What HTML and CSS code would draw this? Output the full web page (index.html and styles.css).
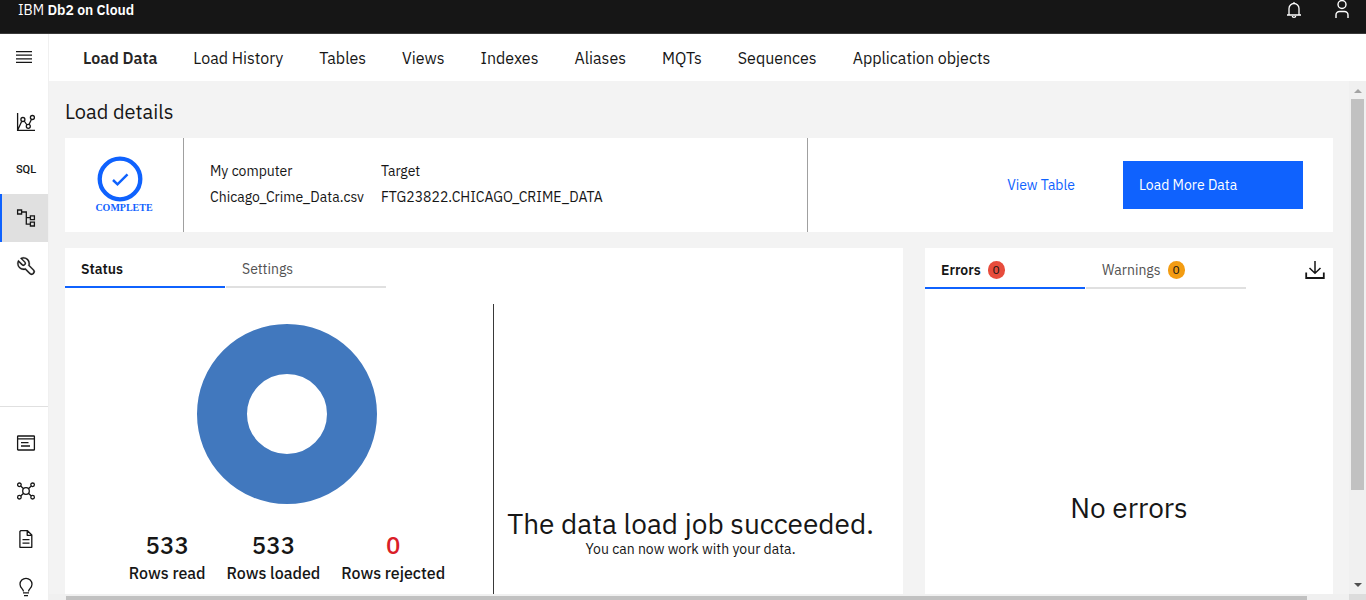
FILE: index.html
```html
<!DOCTYPE html>
<html lang="en">
<head>
<meta charset="utf-8">
<meta name="viewport" content="width=device-width, initial-scale=1">
<title>IBM Db2 on Cloud</title>
<link rel="stylesheet" href="styles.css">
</head>
<body>
<header class="topbar">
  <a class="brand" href="#">IBM <strong>Db2 on Cloud</strong></a>
  <div class="topbar-actions">
    <button class="top-button" type="button" aria-label="Notifications">
      <svg width="20" height="20" viewBox="0 0 20 20" fill="none" stroke="currentColor" stroke-width="1.3"><path d="M10 2v2M3 15h14M5 15V8.500a5 5 0 0 1 10 0V15M8.300 16a1.700 1.400 0 0 0 3.400 0"/></svg>
    </button>
    <button class="top-button" type="button" aria-label="Account">
      <svg width="20" height="20" viewBox="0 0 20 20" fill="none" stroke="currentColor" stroke-width="1.400"><circle cx="10" cy="4.500" r="4"/><path d="M4 18v-3a3.500 3.500 0 0 1 3.500-3.500h5A3.500 3.500 0 0 1 16 15v3"/></svg>
    </button>
  </div>
</header>
<div class="shell">
  <nav class="sidebar" aria-label="Main">
    <button class="menu-button" type="button" aria-label="Open menu">
      <svg width="16" height="12" viewBox="0 0 16 12" fill="none" stroke="currentColor" stroke-width="1.200"><path d="M0 .6h16M0 4.200h16M0 7.800h16M0 11.400h16"/></svg>
    </button>
    <div class="side-group">
      <a class="side-link" href="#" aria-label="Dashboard">
        <svg width="20" height="20" viewBox="0 0 20 20" fill="none" stroke="currentColor" stroke-width="1.300"><path d="M1.600 1v17.300H19M2 17.500 5.600 9.400M8.200 9l2.800 4M13 12.500l2.400-5"/><circle cx="6.900" cy="7.500" r="2"/><circle cx="12.300" cy="14.300" r="2"/><circle cx="16.400" cy="5.500" r="2"/></svg>
      </a>
      <a class="side-link side-link-text" href="#">SQL</a>
      <a class="side-link side-link-active" href="#" aria-label="Data">
        <svg width="20" height="20" viewBox="0 0 20 20" fill="none" stroke="currentColor" stroke-width="1.300"><path d="M1.600 2h4v4h-4zM14.400 7.800h4v3.800h-4zM14.400 14.200h4V18h-4zM5.600 4h4.700v12.100h4.100M10.300 9.700h4.100"/></svg>
      </a>
      <a class="side-link" href="#" aria-label="Administration">
        <svg width="20" height="20" viewBox="0 0 32 32" fill="currentColor" stroke="currentColor" stroke-width=".4"><path d="M12.100 2a9.800 9.800 0 0 0-5.400 1.600l6.400 6.400a2.100 2.100 0 0 1 .2 3 2.100 2.100 0 0 1-3-.2L3.700 6.400A9.840 9.840 0 0 0 2 12.100a10.140 10.140 0 0 0 10.100 10.100 10.900 10.900 0 0 0 2.600-.3l6.700 6.700a5 5 0 0 0 7.100-7.100l-6.700-6.700a10.900 10.900 0 0 0 .3-2.600A10 10 0 0 0 12.100 2zm8 10.100a7.610 7.610 0 0 1-.3 2.100l-.3 1.100.8.800 6.700 6.700a2.880 2.880 0 0 1 .9 2.100A2.720 2.720 0 0 1 27 27a2.900 2.900 0 0 1-4.200 0l-6.700-6.700-.8-.8-1.100.3a7.610 7.610 0 0 1-2.100.3 8.270 8.270 0 0 1-5.700-2.300A7.630 7.630 0 0 1 4 12.100a8.330 8.330 0 0 1 .3-2.200l4.400 4.400a4.140 4.140 0 0 0 5.900.2 4.140 4.140 0 0 0-.2-5.900L10 4.200a6.450 6.450 0 0 1 2-.3 8.270 8.270 0 0 1 5.700 2.300 8.490 8.490 0 0 1 2.400 5.900z"/></svg>
      </a>
    </div>
    <div class="side-group side-group-bottom">
      <a class="side-link" href="#" aria-label="Resources">
        <svg width="20" height="20" viewBox="0 0 20 20" fill="none" stroke="currentColor" stroke-width="1.300"><rect x="1.600" y="3" width="16.800" height="14" rx=".6"/><path d="M1.600 5.800h16.800M5 9.700h7.500M5 13h9"/></svg>
      </a>
      <a class="side-link" href="#" aria-label="Connections">
        <svg width="20" height="20" viewBox="0 0 20 20" fill="none" stroke="currentColor" stroke-width="1.300"><circle cx="10" cy="10" r="3.300"/><circle cx="3.400" cy="3.800" r="1.800"/><circle cx="16.600" cy="3.800" r="1.800"/><circle cx="3.400" cy="16.200" r="1.800"/><circle cx="16.600" cy="16.200" r="1.800"/><path d="m4.700 5.100 2.900 2.600M15.300 5.100l-2.900 2.600M4.700 14.900l2.900-2.600M15.300 14.900l-2.900-2.600"/></svg>
      </a>
      <a class="side-link" href="#" aria-label="Documentation">
        <svg width="20" height="20" viewBox="0 0 20 20" fill="none" stroke="currentColor" stroke-width="1.300" stroke-linejoin="round"><path d="M4.700 1.700h6.800l4.300 4.300v12.300H3.900V2.500zM11.200 1.700v4.600h4.600M6.500 10.700h7M6.500 14.200h7"/></svg>
      </a>
      <a class="side-link" href="#" aria-label="Tips">
        <svg width="20" height="20" viewBox="0 0 20 20" fill="none" stroke="currentColor" stroke-width="1.300"><path d="M7.500 14.500c0-2.500-3.500-3.500-3.500-7.200a6 6 0 0 1 12 0c0 3.700-3.500 4.700-3.500 7.200M7 15.900h6M8 18.600h4"/></svg>
      </a>
    </div>
  </nav>
  <div class="workspace">
    <nav class="section-nav" aria-label="Sections">
      <a class="section-current" href="#">Load Data</a>
      <a href="#">Load History</a>
      <a href="#">Tables</a>
      <a href="#">Views</a>
      <a href="#">Indexes</a>
      <a href="#">Aliases</a>
      <a href="#">MQTs</a>
      <a href="#">Sequences</a>
      <a href="#">Application objects</a>
    </nav>
    <div class="scroll-frame">
      <main class="content">
        <h1 class="page-title">Load details</h1>
        <section class="summary">
          <div class="summary-state">
            <svg width="46" height="46" viewBox="0 0 46 46" fill="none" stroke="currentColor"><circle cx="23" cy="23" r="20.300" stroke-width="4.300"/><path d="m16 24 4.500 4.300 10-10" stroke-width="2.500"/></svg>
            <span class="state-label">COMPLETE</span>
          </div>
          <dl class="summary-info">
            <div><dt>My computer</dt><dd>Chicago_Crime_Data.csv</dd></div>
            <div><dt>Target</dt><dd>FTG23822.CHICAGO_CRIME_DATA</dd></div>
          </dl>
          <div class="summary-actions">
            <a class="view-link" href="#">View Table</a>
            <button class="primary-button" type="button">Load More Data</button>
          </div>
        </section>
        <div class="panels">
          <section class="panel">
            <div class="tabs" role="tablist">
              <button class="tab tab-active" type="button" role="tab" aria-selected="true">Status</button>
              <button class="tab" type="button" role="tab" aria-selected="false">Settings</button>
            </div>
            <div class="status-body">
              <div class="status-chart">
                <svg width="180" height="180" viewBox="0 0 180 180"><circle cx="90" cy="90" r="65" fill="none" stroke="#4178be" stroke-width="50"/></svg>
                <dl class="stats">
                  <div><dt>Rows read</dt><dd>533</dd></div>
                  <div><dt>Rows loaded</dt><dd>533</dd></div>
                  <div><dt>Rows rejected</dt><dd class="rejected">0</dd></div>
                </dl>
              </div>
              <div class="status-message">
                <p class="headline">The data load job succeeded.</p>
                <p class="subline">You can now work with your data.</p>
              </div>
            </div>
          </section>
          <section class="panel">
            <div class="panel-head">
              <div class="tabs" role="tablist">
                <button class="tab tab-active" type="button" role="tab" aria-selected="true">Errors <span class="badge badge-error">0</span></button>
                <button class="tab" type="button" role="tab" aria-selected="false">Warnings <span class="badge badge-warning">0</span></button>
              </div>
              <button class="download" type="button" aria-label="Download">
                <svg width="20" height="20" viewBox="0 0 20 20" fill="none" stroke="currentColor" stroke-width="1.500"><path d="M10 1v12M4.500 8l5.500 5.300L15.500 8"/><path d="M1.200 12.500V18h17.600v-5.500" stroke-width="1.800"/></svg>
              </button>
            </div>
            <p class="headline no-errors">No errors</p>
          </section>
        </div>
      </main>
      <div class="vscroll" aria-hidden="true">
        <svg width="17" height="17" viewBox="0 0 17 17" fill="#a3a3a3"><path d="m5 11 4-4 4 4z"/></svg>
        <div class="vscroll-thumb"></div>
        <svg width="17" height="17" viewBox="0 0 17 17" fill="#505050"><path d="m5 6 4 4 4-4z"/></svg>
      </div>
    </div>
    <div class="hscroll" aria-hidden="true"><div class="hscroll-track"><div class="hscroll-thumb"></div></div><div class="hscroll-corner"></div></div>
  </div>
</div>
</body>
</html>
```
FILE: styles.css
```css
* { box-sizing: border-box; }
body {
  margin: 0;
  height: 100vh;
  overflow: hidden;
  display: flex;
  flex-direction: column;
  font-family: "IBM Plex Sans", Roboto, "Liberation Sans", sans-serif;
  font-size: 14px;
  line-height: 20px;
  color: #161616;
  background: #f3f3f3;
}
a { color: inherit; text-decoration: none; }
button { font: inherit; color: inherit; background: none; border: 0; padding: 0; }
h1, p, dl, dd { margin: 0; }
svg { display: block; flex: none; }

.topbar {
  flex: none;
  display: flex;
  justify-content: space-between;
  align-items: flex-start;
  padding: 0 14px 13px 18px;
  color: #fff;
  background: #161616;
  border-bottom: 1px solid #393939;
}
.brand strong { font-weight: 600; }
.topbar-actions { display: flex; gap: 28px; }

.shell { flex: 1; min-height: 0; display: flex; }
.sidebar {
  flex: none;
  width: 49px;
  display: flex;
  flex-direction: column;
  background: #fff;
  border-right: 1px solid #f0f0f0;
}
.menu-button { flex: none; height: 47px; display: grid; place-items: center; padding-bottom: 2px; }
.side-group { padding-top: 17px; }
.side-group-bottom { margin-top: auto; margin-bottom: -11px; padding-top: 12px; border-top: 1px solid #e0e0e0; }
.side-link {
  height: 48px;
  display: grid;
  place-items: center;
  padding-left: 2px;
  border-left: 2px solid transparent;
}
.side-link-active { background: #e0e0e0; border-left-color: #0f62fe; }
.side-link-text { font: 500 11px/20px Roboto, "Liberation Sans", sans-serif; }

.workspace { flex: 1; min-width: 0; display: flex; flex-direction: column; }
.section-nav {
  flex: none;
  height: 47px;
  display: flex;
  align-items: center;
  gap: 36px;
  padding: 0 34px;
  font-size: 16px;
  background: #fff;
  white-space: nowrap;
}
.section-current { font-weight: 600; color: #262626; }
.scroll-frame { flex: 1; min-height: 0; display: flex; }
.content {
  flex: 1;
  min-width: 0;
  display: flex;
  flex-direction: column;
  padding: 16px 16px 0;
  overflow: hidden;
}
.page-title { font-size: 20px; line-height: 28px; font-weight: 400; margin: 1px 0 12px; }

.summary {
  flex: none;
  display: grid;
  grid-template-columns: 119px 624fr 525fr;
  background: #fff;
}
.summary-state {
  display: flex;
  flex-direction: column;
  align-items: center;
  padding: 18px 0 19px;
  border-right: 1px solid #a0a0a0;
  color: #0f62fe;
}
.summary-state svg { margin-right: 8px; }
.state-label { font: bold 10px/11px "Liberation Serif", serif; }
.summary-info {
  display: flex;
  gap: 17px;
  padding: 20px 0 0 26px;
  line-height: 26px;
  border-right: 1px solid #a0a0a0;
}
.summary-actions {
  display: flex;
  align-items: center;
  justify-content: flex-end;
  gap: 48px;
  padding-right: 30px;
}
.view-link { color: #0f62fe; }
.primary-button { width: 180px; height: 48px; padding-left: 16px; text-align: left; color: #fff; background: #0f62fe; }

.panels {
  flex: 1;
  min-height: 0;
  display: grid;
  grid-template-columns: 838fr 408fr;
  gap: 22px;
  margin-top: 16px;
}
.panel { display: flex; flex-direction: column; background: #fff; }
.panel-head { display: flex; justify-content: space-between; align-items: center; padding-right: 8px; }
.tabs { display: flex; gap: 1px; }
.tab {
  width: 160px;
  height: 40px;
  display: flex;
  align-items: center;
  gap: 7px;
  padding: 4px 16px 0;
  color: #525252;
  border-bottom: 2px solid #e0e0e0;
}
.tab-active { font-weight: 600; color: #161616; border-bottom-color: #0f62fe; }
.panel-head .tab { height: 41px; }
.download { padding-top: 3px; }
.badge {
  width: 17px;
  height: 18px;
  border-radius: 9px;
  font-size: 12px;
  line-height: 18px;
  font-weight: 400;
  text-align: center;
  color: #161616;
}
.badge-error { background: #e74c3c; }
.badge-warning { background: #f39c12; }

.status-body { flex: 1; display: grid; grid-template-columns: 429fr 409fr; margin-top: 16px; }
.status-chart {
  display: flex;
  flex-direction: column;
  align-items: center;
  padding: 20px 0 0 16px;
  border-right: 1px solid #393939;
}
.stats { display: flex; gap: 21px; margin-top: 25px; text-align: center; font-weight: 500; }
.stats div { display: flex; flex-direction: column-reverse; }
.stats dt { font-size: 16px; line-height: 24px; }
.stats dd { font-size: 24px; line-height: 32px; }
.stats .rejected { color: #da1e28; }
.status-message { padding: 204px 16px 0 0; text-align: center; }
.headline { font-size: 28px; line-height: 32px; font-weight: 400; }
.subline { line-height: 18px; }
.no-errors { text-align: center; margin-top: 203px; }

.vscroll { flex: none; width: 17px; display: flex; flex-direction: column; padding-top: 1px; background: #f0f0f0; }
.vscroll-thumb { flex: none; height: 82%; max-height: calc(100% - 121px); width: 13px; margin: 0 2px auto; background: #c1c1c1; }
.hscroll { flex: none; height: 6px; display: flex; background: #f0f0f0; }
.hscroll-track { flex: 1; padding: 2px 42px 0 17px; }
.hscroll-thumb { height: 4px; background: #c1c1c1; }
.hscroll-corner { width: 17px; background: #dcdcdc; }
```
